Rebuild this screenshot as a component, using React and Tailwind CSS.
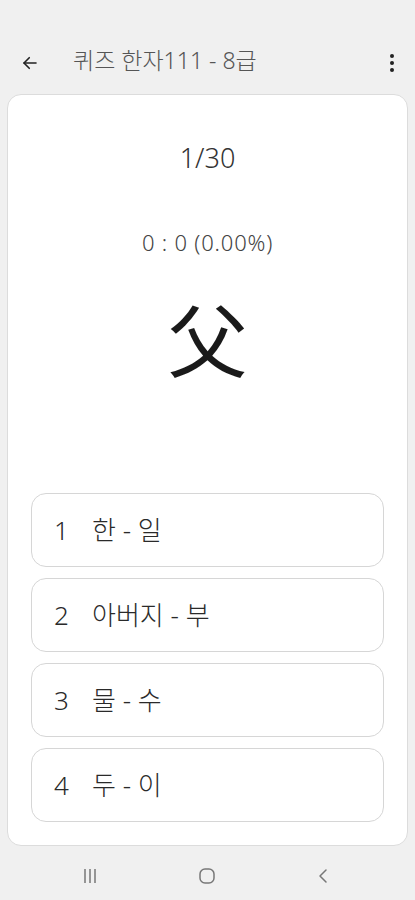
const options = [
  { n: 1, label: "한 - 일" },
  { n: 2, label: "아버지 - 부" },
  { n: 3, label: "물 - 수" },
  { n: 4, label: "두 - 이" },
];

const font = { fontFamily: '"Noto Sans", "Noto Sans CJK KR", sans-serif' };

export default function App() {
  return (
    <div className="flex h-[900px] w-[415px] flex-col bg-[#f0f0f0]" style={font}>
      <header className="flex h-[94px] shrink-0 items-end pb-[20px]">
        <button className="ml-[19px] flex h-[22px] w-[22px] items-center justify-center text-[#222]">
          <svg width="18" height="18" viewBox="0 0 24 24" fill="none" stroke="currentColor" strokeWidth="2.2" strokeLinecap="round" strokeLinejoin="round">
            <path d="M20 12H4" />
            <path d="M11 5l-7 7 7 7" />
          </svg>
        </button>
        <h1 className="ml-[32px] text-[23px] font-light leading-[28px] text-[#555]">퀴즈 한자111 - 8급</h1>
        <button className="ml-auto mr-[18px] flex h-[22px] w-[10px] flex-col items-center justify-center gap-[3px]">
          <span className="h-[4px] w-[4px] rounded-full bg-[#222]" />
          <span className="h-[4px] w-[4px] rounded-full bg-[#222]" />
          <span className="h-[4px] w-[4px] rounded-full bg-[#222]" />
        </button>
      </header>

      <main className="mx-[7px] flex h-[752px] flex-col rounded-[14px] border border-[#dcdcdc] bg-white">
        <div className="mt-[45px] text-center text-[27px] font-light leading-[36px] text-[#333]">1/30</div>
        <div className="mt-[51px] text-center text-[22px] font-light leading-[30px] tracking-[0.8px] text-[#444]">0 : 0 (0.00%)</div>
        <div className="mt-[33px] text-center text-[80px] leading-[100px] text-[#1a1a1a]">父</div>

        <div className="mt-auto mb-[23px] flex flex-col gap-[11px] px-[23px]">
          {options.map((o) => (
            <button
              key={o.n}
              className="flex h-[74px] items-center rounded-[15px] border border-[#d6d6d6] bg-white pl-[22px] text-left text-[26px] font-light text-[#2a2a2a]"
            >
              <span className="w-[38px]">{o.n}</span>
              <span>{o.label}</span>
            </button>
          ))}
        </div>
      </main>

      <nav className="flex flex-1 items-center justify-between pt-[5px] pl-[81px] pr-[84px] text-[#777]">
        <svg width="18" height="16" viewBox="0 0 18 16" fill="none" stroke="currentColor" strokeWidth="1.5">
          <path d="M4 1v14M9 1v14M14 1v14" />
        </svg>
        <svg width="18" height="18" viewBox="0 0 18 18" fill="none" stroke="currentColor" strokeWidth="1.5">
          <rect x="2" y="2" width="14" height="14" rx="5" />
        </svg>
        <svg width="16" height="18" viewBox="0 0 16 18" fill="none" stroke="currentColor" strokeWidth="1.5" strokeLinecap="round" strokeLinejoin="round">
          <path d="M11 3L5 9l6 6" />
        </svg>
      </nav>
    </div>
  );
}
